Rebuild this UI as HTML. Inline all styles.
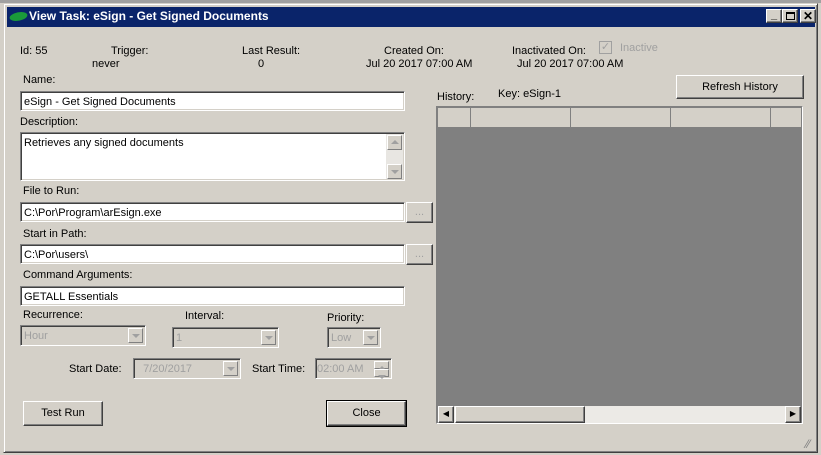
<!DOCTYPE html>
<html><head><style>
*{margin:0;padding:0;box-sizing:border-box}
body{width:821px;height:455px;background:#d4d0c8;font-family:"Liberation Sans",Arial,sans-serif;font-size:11px;color:#000;position:relative;overflow:hidden}
.a{position:absolute;white-space:nowrap}
.in{position:absolute;background:#fff;border:1px solid;border-color:#808080 #fff #fff #808080;box-shadow:inset 1px 1px 0 #404040,inset -1px -1px 0 #d4d0c8;padding:4px 0 0 3px}
.dis{background:#d4d0c8;color:#a0a0a0}
.btn{position:absolute;background:#d4d0c8;border:1px solid;border-color:#fff #404040 #404040 #fff;box-shadow:inset -1px -1px 0 #808080;text-align:center}
.dd{position:absolute;right:2px;top:2px;width:15px;height:15px;background:#d4d0c8;border:1px solid;border-color:#fff #808080 #808080 #fff}
.dd:after{content:"";position:absolute;left:3px;top:5px;border-left:4px solid transparent;border-right:4px solid transparent;border-top:4px solid #a0a0a0}
.up:after{border-top:none;border-bottom:4px solid #a0a0a0;top:4px}
</style></head><body>
<div class="a" style="left:0;top:0;width:821px;height:3px;background:#a0a0a0"></div>
<div class="a" style="left:3px;top:3px;width:815px;height:450px;border:1px solid;border-color:#d4d0c8 #404040 #404040 #d4d0c8;box-shadow:inset 1px 1px 0 #fff,inset -1px -1px 0 #808080"></div>
<div class="a" style="left:7px;top:7px;width:808px;height:20px;background:#0a246a"></div>
<div class="a" style="left:10px;top:12px;width:17px;height:9px;background:#1a9a3a;border-radius:50%;transform:skewX(-30deg)"></div>
<div class="a" style="left:29px;top:9px;color:#fff;font-weight:bold;font-size:12px">View Task: eSign - Get Signed Documents</div>
<div class="btn" style="left:766px;top:9px;width:16px;height:14px;font-weight:bold;line-height:10px;font-size:11px">_</div>
<div class="btn" style="left:782px;top:9px;width:16px;height:14px"><div style="position:absolute;left:3px;top:2px;width:9px;height:8px;border:1px solid #000;border-top-width:2px"></div></div>
<div class="btn" style="left:800px;top:9px;width:16px;height:14px;font-weight:bold;font-size:12px;line-height:12px">✕</div>

<div class="a" style="left:20px;top:45px">Id: 55</div>
<div class="a" style="left:111px;top:45px">Trigger:</div>
<div class="a" style="left:92px;top:58px">never</div>
<div class="a" style="left:242px;top:45px">Last Result:</div>
<div class="a" style="left:258px;top:58px">0</div>
<div class="a" style="left:384px;top:45px">Created On:</div>
<div class="a" style="left:366px;top:58px">Jul 20 2017 07:00 AM</div>
<div class="a" style="left:512px;top:45px">Inactivated On:</div>
<div class="a" style="left:517px;top:58px">Jul 20 2017 07:00 AM</div>
<div class="a" style="left:599px;top:41px;width:13px;height:13px;border:1px solid #a0a0a0;background:#d4d0c8;color:#a0a0a0;font-size:11px;line-height:11px;text-align:center">✓</div>
<div class="a" style="left:620px;top:42px;color:#a0a0a0">Inactive</div>

<div class="a" style="left:23px;top:74px">Name:</div>
<div class="in" style="left:20px;top:91px;width:385px;height:20px">eSign - Get Signed Documents</div>
<div class="a" style="left:20px;top:116px">Description:</div>
<div class="in" style="left:20px;top:132px;width:385px;height:49px">Retrieves any signed documents
<div class="a" style="right:1px;top:1px;width:17px;height:45px;background:#e8e6e2"><div class="dd up" style="right:1px;top:1px"></div><div class="dd" style="right:1px;top:auto;bottom:0"></div></div></div>
<div class="a" style="left:23px;top:185px">File to Run:</div>
<div class="in" style="left:20px;top:202px;width:385px;height:20px">C:\Por\Program\arEsign.exe</div>
<div class="btn" style="left:406px;top:202px;width:27px;height:21px;color:#a0a0a0;line-height:18px">...</div>
<div class="a" style="left:23px;top:228px">Start in Path:</div>
<div class="in" style="left:20px;top:244px;width:385px;height:20px">C:\Por\users\</div>
<div class="btn" style="left:406px;top:244px;width:27px;height:21px;color:#a0a0a0;line-height:18px">...</div>
<div class="a" style="left:23px;top:269px">Command Arguments:</div>
<div class="in" style="left:20px;top:286px;width:385px;height:20px">GETALL Essentials</div>

<div class="a" style="left:23px;top:309px">Recurrence:</div>
<div class="in dis" style="left:20px;top:325px;width:126px;height:21px">Hour<div class="dd"></div></div>
<div class="a" style="left:185px;top:310px">Interval:</div>
<div class="in dis" style="left:172px;top:327px;width:107px;height:21px">1<div class="dd"></div></div>
<div class="a" style="left:327px;top:312px">Priority:</div>
<div class="in dis" style="left:327px;top:327px;width:54px;height:21px">Low<div class="dd"></div></div>
<div class="a" style="left:69px;top:363px">Start Date:</div>
<div class="in dis" style="left:133px;top:358px;width:108px;height:21px">&nbsp;&nbsp;7/20/2017<div class="dd"></div></div>
<div class="a" style="left:252px;top:363px">Start Time:</div>
<div class="in dis" style="left:315px;top:358px;width:77px;height:21px;padding-left:1px">02:00 AM<div class="dd up" style="height:8px;top:2px"></div><div class="dd" style="height:8px;top:10px"></div></div>

<div class="btn" style="left:23px;top:401px;width:80px;height:25px;line-height:22px">Test Run</div>
<div class="btn" style="left:327px;top:401px;width:79px;height:25px;line-height:23px;outline:1px solid #000">Close</div>

<div class="a" style="left:437px;top:91px">History:</div>
<div class="a" style="left:498px;top:88px">Key: eSign-1</div>
<div class="btn" style="left:676px;top:75px;width:128px;height:24px;line-height:22px">Refresh History</div>

<div class="a" style="left:436px;top:106px;width:367px;height:318px;border:1px solid;border-color:#808080 #fff #fff #808080;background:#808080">
<div class="a" style="left:1px;top:1px;width:363px;height:20px;background:#d4d0c8;border-bottom:1px solid #808080"></div>
<div class="a" style="left:33px;top:1px;width:1px;height:20px;background:#808080"></div>
<div class="a" style="left:133px;top:1px;width:1px;height:20px;background:#808080"></div>
<div class="a" style="left:233px;top:1px;width:1px;height:20px;background:#808080"></div>
<div class="a" style="left:333px;top:1px;width:1px;height:20px;background:#808080"></div>
<div class="a" style="left:1px;top:299px;width:363px;height:17px;background:#eceae6"></div>
<div class="btn" style="left:1px;top:299px;width:16px;height:17px;font-size:8px;line-height:14px">◀</div>
<div class="btn" style="left:18px;top:299px;width:130px;height:17px"></div>
<div class="btn" style="left:348px;top:299px;width:16px;height:17px;font-size:8px;line-height:14px">▶</div>
</div>
<div class="a" style="left:806px;top:437px;color:#808080;font-size:12px">⁄⁄</div>
</body></html>
